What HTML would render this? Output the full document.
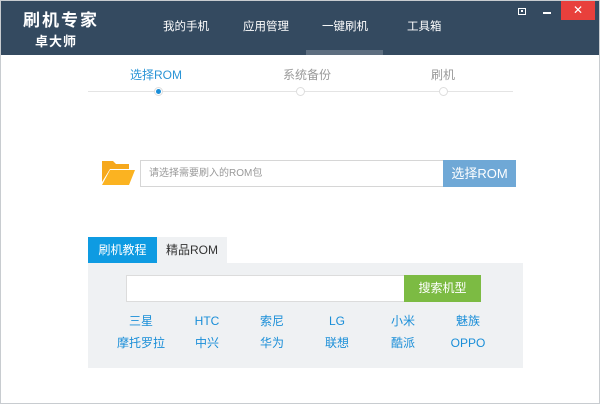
<!DOCTYPE html><html><head><meta charset="utf-8"><style>
*{margin:0;padding:0;box-sizing:border-box}
body{width:600px;height:404px;background:#fff;font-family:"Liberation Sans","Noto Sans CJK SC",sans-serif;position:relative;overflow:hidden}
.frame{position:absolute;left:0;top:0;width:600px;height:404px;border:1px solid #c8ccd0}
.hd{position:absolute;left:0;top:0;width:600px;height:55px;background:#344a60}
.a{position:absolute;white-space:nowrap}
.logo1{left:23px;top:10px;font-size:17px;line-height:22px;font-weight:bold;color:#fff;letter-spacing:2px}
.logo2{left:35px;top:34px;font-size:13px;line-height:16px;font-weight:bold;color:#fff;letter-spacing:1px}
.nav{top:19px;font-size:11.5px;line-height:16px;color:#fff}
.ind{left:306px;top:50px;width:77px;height:5px;background:#5d6e80}
.close{left:561px;top:0;width:34px;height:20px;background:#e8403c;color:#fff;font-size:12px;text-align:center;line-height:20px}
.st{top:67px;font-size:12px;line-height:16px;color:#999}
.line{left:88px;top:91px;width:425px;height:1px;background:#e4e4e4}
.dot{width:9px;height:9px;border-radius:50%;border:1px solid #ddd;background:#fff;top:87px}
.lk{font-size:12px;line-height:14px;color:#1a8ed8;width:60px;text-align:center}
</style></head><body>
<div class="hd"></div>
<div class="a logo1">刷机专家</div>
<div class="a logo2">卓大师</div>
<div class="a nav" style="left:163px">我的手机</div>
<div class="a nav" style="left:243px">应用管理</div>
<div class="a nav" style="left:322px">一键刷机</div>
<div class="a nav" style="left:407px">工具箱</div>
<div class="a ind"></div>
<div class="a" style="left:518px;top:8px;width:8px;height:7px;border:1px solid #fff"><div style="width:2px;height:2px;background:#fff;margin:1px auto"></div></div>
<div class="a" style="left:543px;top:12px;width:8px;height:2px;background:#fff"></div>
<div class="a close">✕</div>
<div class="a st" style="left:130px;color:#2a94d6">选择ROM</div>
<div class="a st" style="left:283px">系统备份</div>
<div class="a st" style="left:431px">刷机</div>
<div class="a line"></div>
<div class="a dot" style="left:154px"><div style="width:5px;height:5px;border-radius:50%;background:#1a8ed8;margin:1px"></div></div>
<div class="a dot" style="left:296px"></div>
<div class="a dot" style="left:439px"></div>
<svg class="a" style="left:102px;top:160px" width="33" height="26" viewBox="0 0 33 26"><path d="M0 1h11l3 3h13v5H8L0 22z" fill="#f6a81c"/><path d="M8 10h25l-6 15H0z" fill="#fbb321"/></svg>
<div class="a" style="left:140px;top:160px;width:304px;height:27px;border:1px solid #d6d6d6;font-size:10px;line-height:25px;color:#999;padding-left:8px">请选择需要刷入的ROM包</div>
<div class="a" style="left:443px;top:160px;width:73px;height:27px;background:#6fa8d6;color:#fff;font-size:13px;text-align:center;line-height:27px">选择ROM</div>
<div class="a" style="left:88px;top:237px;width:69px;height:26px;background:#0e9be2;color:#fff;font-size:12px;text-align:center;line-height:26px">刷机教程</div>
<div class="a" style="left:157px;top:237px;width:70px;height:26px;background:#eff1f3;color:#333;font-size:12px;text-align:center;line-height:26px">精品ROM</div>
<div class="a" style="left:88px;top:263px;width:435px;height:105px;background:#eff1f3"></div>
<div class="a" style="left:126px;top:275px;width:279px;height:27px;background:#fff;border:1px solid #dcdcdc"></div>
<div class="a" style="left:404px;top:275px;width:77px;height:27px;background:#7cbb43;color:#fff;font-size:12px;text-align:center;line-height:27px">搜索机型</div>
<div class="a lk" style="left:111px;top:314px">三星</div>
<div class="a lk" style="left:177px;top:314px">HTC</div>
<div class="a lk" style="left:242px;top:314px">索尼</div>
<div class="a lk" style="left:307px;top:314px">LG</div>
<div class="a lk" style="left:373px;top:314px">小米</div>
<div class="a lk" style="left:438px;top:314px">魅族</div>
<div class="a lk" style="left:111px;top:336px">摩托罗拉</div>
<div class="a lk" style="left:177px;top:336px">中兴</div>
<div class="a lk" style="left:242px;top:336px">华为</div>
<div class="a lk" style="left:307px;top:336px">联想</div>
<div class="a lk" style="left:373px;top:336px">酷派</div>
<div class="a lk" style="left:438px;top:336px">OPPO</div>
<div class="frame"></div>
</body></html>
